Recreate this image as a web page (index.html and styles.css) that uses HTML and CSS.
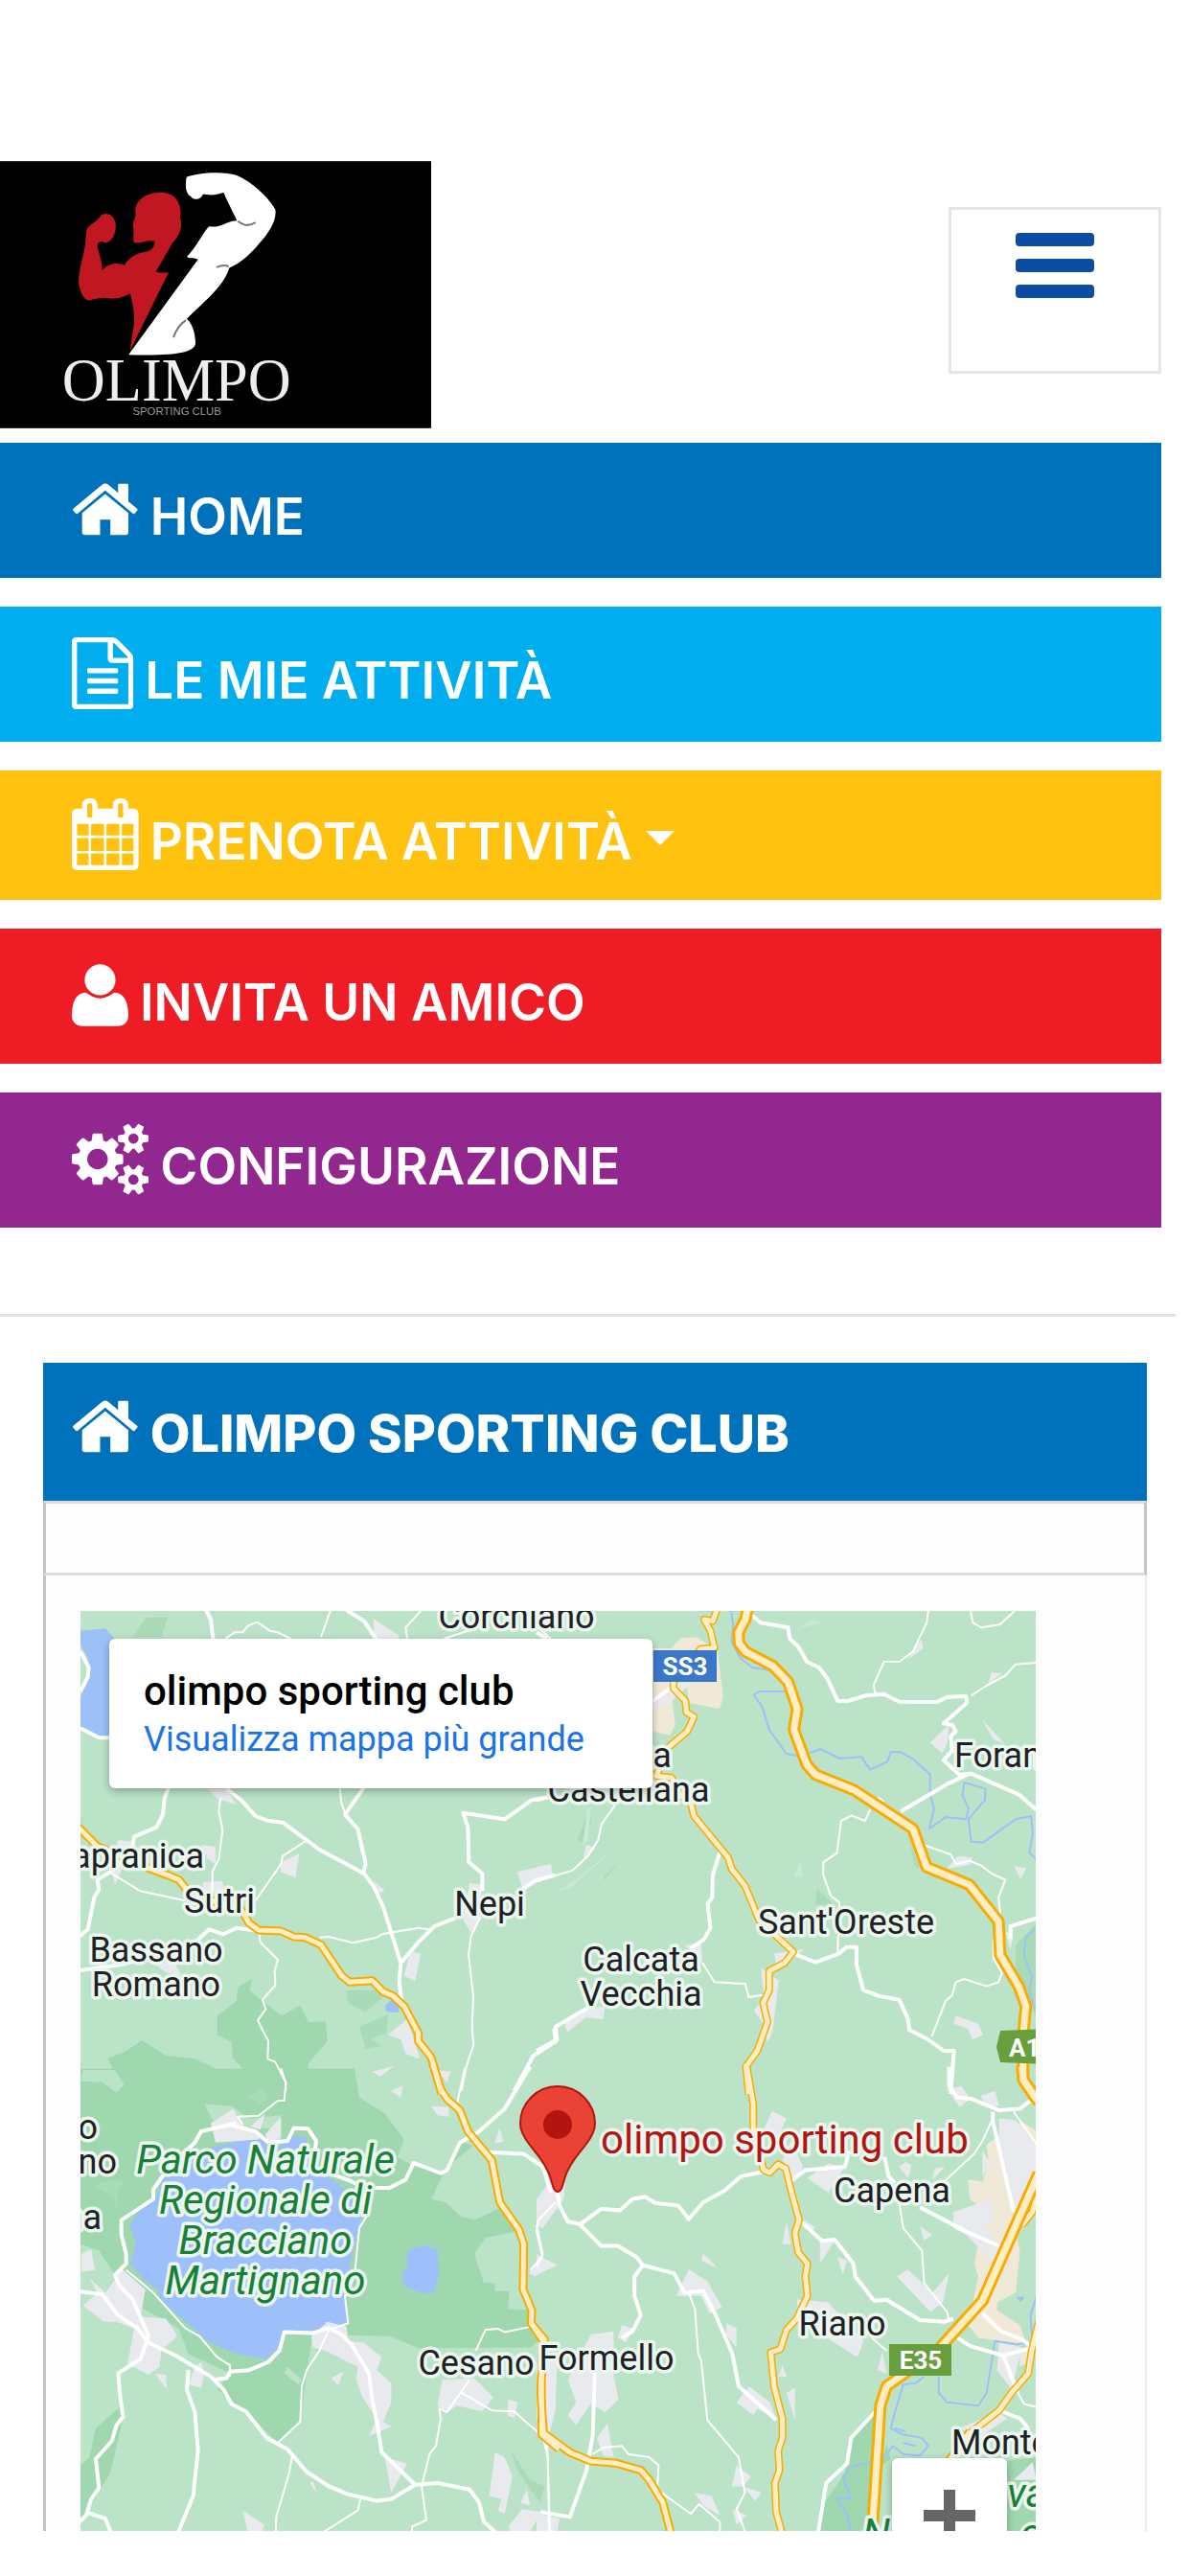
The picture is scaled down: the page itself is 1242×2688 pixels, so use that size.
FILE: index.html
```html
<!DOCTYPE html>
<html lang="it">
<head>
<meta charset="utf-8">
<meta name="viewport" content="width=device-width, initial-scale=1">
<title>Olimpo Sporting Club</title>
<link rel="stylesheet" href="styles.css">
</head>
<body>
<header class="site-header">
  <div class="brand-row">
    <a class="brand" href="#" aria-label="Olimpo Sporting Club">
      <svg class="logo" viewBox="0 54 1350 836">
        <rect y="54" width="1350" height="836" fill="#000"/>
        <path fill="#c01722" d="M408 645C412 600 422 570 420 540 418 505 412 490 408 468 390 478 370 486 345 484 325 478 300 484 280 490 262 490 252 465 247 440 242 410 262 350 266 320 270 290 268 270 275 262 290 245 305 242 318 222 335 212 358 222 362 250 364 275 355 305 330 310 310 300 303 310 306 328 312 350 320 370 320 395 340 372 370 370 390 380 400 360 425 342 455 338 470 335 482 330 485 305 465 298 445 312 420 310 414 295 422 270 416 255 416 240 426 235 424 215 420 180 455 150 510 152 550 155 572 190 564 230 574 260 560 290 540 310L488 400C500 406 515 402 528 402Z"/>
        <path fill="#fff" d="M404 658L620 362C605 352 590 362 586 352 610 330 640 270 655 258 690 265 710 240 742 240 725 205 712 180 700 152 670 165 650 158 635 158 630 175 608 178 598 165 580 155 580 130 584 104 620 90 700 84 745 100 800 125 845 175 862 205 868 240 840 280 815 308 780 350 750 375 718 388 700 450 630 500 585 548 605 565 612 600 612 625 608 655 540 664 404 660Z"/>
        <path d="M745 242Q770 264 800 246M678 386Q700 376 716 384M582 552Q555 570 543 606" fill="none" stroke="#777" stroke-width="6"/>
        <text class="logo-name" x="553" y="804" text-anchor="middle">OLIMPO</text>
        <text class="logo-sub" x="554" y="850" text-anchor="middle">SPORTING CLUB</text>
      </svg>
    </a>
    <button class="menu-toggle" type="button" aria-label="Menu"><span class="bar"></span><span class="bar"></span><span class="bar"></span></button>
  </div>
  <nav class="menu">
    <a class="item home" href="#"><svg class="icon" viewBox="64 0 1664 1792"><path d="M1472 992v480q0 26-19 45t-45 19h-384v-384h-256v384h-384q-26 0-45-19t-19-45v-480q0-1 .5-3t.5-3l575-474 575 474q1 2 1 6zm223-69l-62 74q-8 9-21 11h-3q-13 0-21-7l-692-577-692 577q-12 8-24 7-13-2-21-11l-62-74q-8-10-7-23.5t11-21.5l719-599q32-26 76-26t76 26l244 204v-195q0-14 9-23t23-9h192q14 0 23 9t9 23v408l219 182q10 8 11 21.5t-7 23.5z"/></svg><span>HOME</span></a>
    <a class="item activities" href="#"><svg class="icon" viewBox="128 0 1536 1792"><path d="M1596 380q28 28 48 76t20 88v1152q0 40-28 68t-68 28h-1344q-40 0-68-28t-28-68v-1600q0-40 28-68t68-28h896q40 0 88 20t76 48zm-444-244v376h376q-10-29-22-41l-313-313q-12-12-41-22zm384 1528v-1024h-416q-40 0-68-28t-28-68v-416h-768v1536h1280zm-1024-864q0-14 9-23t23-9h704q14 0 23 9t9 23v64q0 14-9 23t-23 9h-704q-14 0-23-9t-9-23v-64zm736 224q14 0 23 9t9 23v64q0 14-9 23t-23 9h-704q-14 0-23-9t-9-23v-64q0-14 9-23t23-9h704zm0 256q14 0 23 9t9 23v64q0 14-9 23t-23 9h-704q-14 0-23-9t-9-23v-64q0-14 9-23t23-9h704z"/></svg><span>LE MIE ATTIVITÀ</span></a>
    <button class="item booking" type="button" aria-haspopup="true"><svg class="icon" viewBox="64 0 1664 1792"><path d="M192 1664h288v-288h-288v288zm352 0h320v-288h-320v288zm-352-352h288v-320h-288v320zm352 0h320v-320h-320v320zm-352-384h288v-288h-288v288zm736 736h320v-288h-320v288zm-384-736h320v-288h-320v288zm768 736h288v-288h-288v288zm-384-352h320v-320h-320v320zm-352-864v-288q0-13-9.5-22.5t-22.5-9.5h-64q-13 0-22.5 9.5t-9.5 22.5v288q0 13 9.5 22.5t22.5 9.5h64q13 0 22.5-9.5t9.5-22.5zm736 864h288v-320h-288v320zm-384-384h320v-288h-320v288zm384 0h288v-288h-288v288zm32-480v-288q0-13-9.5-22.5t-22.5-9.5h-64q-13 0-22.5 9.5t-9.5 22.5v288q0 13 9.5 22.5t22.5 9.5h64q13 0 22.5-9.5t9.5-22.5zm384-64v1280q0 52-38 90t-90 38h-1408q-52 0-90-38t-38-90v-1280q0-52 38-90t90-38h128v-96q0-66 47-113t113-47h64q66 0 113 47t47 113v96h384v-96q0-66 47-113t113-47h64q66 0 113 47t47 113v96h128q52 0 90 38t38 90z"/></svg><span>PRENOTA ATTIVITÀ</span><span class="caret"></span></button>
    <a class="item invite" href="#"><svg class="icon" viewBox="192 0 1408 1792"><path d="M1600 1405q0 120-73 189.500t-194 69.500h-874q-121 0-194-69.500t-73-189.500q0-53 3.500-103.500t14-109 26.500-108.500 43-97.500 62-81 85.500-53.500 111.500-20q9 0 42 21.500t74.500 48 108 48 133.500 21.500 133.500-21.500 108-48 74.500-48 42-21.500q61 0 111.500 20t85.500 53.500 62 81 43 97.500 26.500 108.500 14 109 3.500 103.500zm-320-893q0 159-112.500 271.500t-271.500 112.500-271.500-112.500-112.500-271.500 112.500-271.500 271.500-112.500 271.500 112.500 112.500 271.500z"/></svg><span>INVITA UN AMICO</span></a>
    <a class="item settings" href="#"><svg class="icon" viewBox="0 0 1920 1792"><path d="M896 896q0-106-75-181t-181-75-181 75-75 181 75 181 181 75 181-75 75-181zm768 512q0-52-38-90t-90-38-90 38-38 90q0 53 37.500 90.500t90.500 37.500 90.500-37.500 37.500-90.500zm0-1024q0-52-38-90t-90-38-90 38-38 90q0 53 37.500 90.500t90.500 37.500 90.500-37.500 37.500-90.500zm-384 421v185q0 10-7 19.500t-16 10.500l-155 24q-11 35-32 76 34 48 90 115 7 11 7 20 0 12-7 19-23 30-82.500 89.500t-78.500 59.500q-11 0-21-7l-115-90q-37 19-77 31-11 108-23 155-7 24-30 24h-186q-11 0-20-7.500t-10-17.500l-23-153q-34-10-75-31l-118 89q-7 7-20 7-11 0-21-8-144-133-144-160 0-9 7-19 10-14 41-53t47-61q-23-44-35-82l-152-24q-10-1-17-9.500t-7-19.500v-185q0-10 7-19.500t16-10.500l155-24q11-35 32-76-34-48-90-115-7-11-7-20 0-12 7-20 22-30 82-89t79-59q11 0 21 7l115 90q34-18 77-32 11-108 23-154 7-24 30-24h186q11 0 20 7.500t10 17.500l23 153q34 10 75 31l118-89q8-7 20-7 11 0 21 8 144 133 144 160 0 8-7 19-12 16-42 54t-45 60q23 48 34 82l152 23q10 2 17 10.500t7 19.500zm640 533v140q0 16-149 31-12 27-30 52 51 113 51 138 0 4-4 7-122 71-124 71-8 0-46-47t-52-68q-20 2-30 2t-30-2q-14 21-52 68t-46 47q-2 0-124-71-4-3-4-7 0-25 51-138-18-25-30-52-149-15-149-31v-140q0-16 149-31 13-29 30-52-51-113-51-138 0-4 4-7 4-2 35-20t59-34 30-16q8 0 46 46.500t52 67.500q20-2 30-2t30 2q51-71 92-112l6-2q4 0 124 70 4 3 4 7 0 25-51 138 17 23 30 52 149 15 149 31zm0-1024v140q0 16-149 31-12 27-30 52 51 113 51 138 0 4-4 7-122 71-124 71-8 0-46-47t-52-68q-20 2-30 2t-30-2q-14 21-52 68t-46 47q-2 0-124-71-4-3-4-7 0-25 51-138-18-25-30-52-149-15-149-31v-140q0-16 149-31 13-29 30-52-51-113-51-138 0-4 4-7 4-2 35-20t59-34 30-16q8 0 46 46.500t52 67.500q20-2 30-2t30 2q51-71 92-112l6-2q4 0 124 70 4 3 4 7 0 25-51 138 17 23 30 52 149 15 149 31z"/></svg><span>CONFIGURAZIONE</span></a>
  </nav>
</header>
<hr class="divider">
<main class="panel">
  <h1 class="panel-title"><svg class="icon" viewBox="64 0 1664 1792"><path d="M1472 992v480q0 26-19 45t-45 19h-384v-384h-256v384h-384q-26 0-45-19t-19-45v-480q0-1 .5-3t.5-3l575-474 575 474q1 2 1 6zm223-69l-62 74q-8 9-21 11h-3q-13 0-21-7l-692-577-692 577q-12 8-24 7-13-2-21-11l-62-74q-8-10-7-23.5t11-21.5l719-599q32-26 76-26t76 26l244 204v-195q0-14 9-23t23-9h192q14 0 23 9t9 23v408l219 182q10 8 11 21.5t-7 23.5z"/></svg><span>OLIMPO SPORTING CLUB</span></h1>
  <div class="panel-strip"></div>
  <div class="panel-body">
    <section class="map" aria-label="Mappa">
      <svg class="map-canvas" viewBox="84 1681 997 960" preserveAspectRatio="xMinYMin slice">
        <defs>
          <g id="highways">
            <svg class="tile" x="60" y="1660" width="520" height="520" viewBox="0 0 1560 1560" preserveAspectRatio="none"><path d="M60 735L125 800 290 870 345 890 380 905 420 955 570 990 600 1040 630 1062 700 1065 740 1083 775 1085 825 1108 890 1205 915 1225 985 1220 1020 1255 1050 1268 1085 1300 1130 1385 1130 1410 1170 1460 1203 1575"/></svg>
            <svg class="tile" x="60" y="2160" width="520" height="528" viewBox="0 0 1560 1568" preserveAspectRatio="none"><path d="M1175 -20L1200 60 1220 90 1260 125 1285 190 1360 280 1385 410 1445 495 1460 540 1458 680 1485 745 1483 785 1525 835 1515 960 1517 1130 1570 1175"/></svg>
            <svg class="tile" x="560" y="2160" width="682" height="528" viewBox="0 0 1568 1568" preserveAspectRatio="none"><path d="M-5 800L16 840 10 1000 17 1125 80 1185 130 1212 190 1218 250 1240 270 1270 303 1340 325 1450M1040 1120L990 1210"/></svg>
          </g>
          <g id="state-roads">
            <svg class="tile" x="560" y="1660" width="560" height="520" viewBox="0 0 1568 1560" preserveAspectRatio="none"><path d="M530 50L515 95 490 90 508 125 520 178 480 182 400 285 400 305 435 345 438 380 460 395 440 440 380 495 350 580 395 585 420 640 450 660 460 705 560 835 570 870 610 925 650 1030 750 1130 725 1165 680 1190 680 1250 662 1290 675 1350 645 1440 612 1490 620 1575"/></svg>
            <svg class="tile" x="560" y="2160" width="682" height="528" viewBox="0 0 1568 1568" preserveAspectRatio="none"><path d="M503 -20L520 105 520 180 545 310 560 318 580 292 598 305 612 380 630 465 620 505 628 565 650 600 645 640 650 700 625 770 600 805 585 865 562 875 570 980 590 1080 590 1140 580 1180 583 1240 572 1280 575 1370 590 1440M1205 780L1188 870 1180 940 1140 1000 1110 1055 1040 1125M1200 390L1190 440 1165 480"/></svg>
          </g>
          <g id="motorway">
            <svg class="tile" x="560" y="1660" width="560" height="520" viewBox="0 0 1568 1560" preserveAspectRatio="none"><path d="M618 50L610 90 590 130 592 165 610 190 690 235 735 285 762 370 752 435 790 545 815 575 930 625 1100 745 1140 865 1265 920 1350 1035 1355 1140 1410 1240 1430 1300 1422 1390 1422 1530 1460 1590"/></svg>
            <svg class="tile" x="560" y="2160" width="682" height="528" viewBox="0 0 1568 1568" preserveAspectRatio="none"><path d="M1165 -10L1168 30 1205 100M1205 320L1070 715 965 865 840 980 825 1040 805 1440"/></svg>
          </g>
        </defs>
        <rect class="land" x="84" y="1681" width="997" height="960"/>
        <g class="areas">
          <svg class="tile" x="60" y="1660" width="520" height="520" viewBox="0 0 1560 1560" preserveAspectRatio="none">
            <path class="park" d="M72 1565L72 1540 100 1530 180 1555 175 1500 158 1465 215 1440 265 1408 340 1455 430 1465 520 1508 585 1500 550 1465 545 1412 500 1390 500 1330 560 1285 565 1240 610 1215 600 1250 700 1330 760 1298 785 1350 840 1348 845 1410 785 1480 785 1515 865 1545 900 1520 935 1565Z"/>
            <path class="wood" d="M275 85L345 82 325 145 235 145ZM905 1250L1000 1250 1020 1270 965 1320 910 1290ZM945 1365L1035 1325 1030 1385 980 1400 1015 1425 965 1435Z"/>
            <path class="water" d="M72 125L150 118 180 150 180 455 130 455 72 425ZM1025 1300L1045 1280 1070 1300 1068 1320 1030 1318Z"/>
            <path class="land" d="M72 170L95 210 102 250 72 335Z"/>
            <path class="town" d="M990 88L1070 140 1070 150 990 150ZM470 620L530 620 560 670 500 650ZM700 850L758 822 745 898 698 880ZM190 780L235 785 220 830 180 920 170 880ZM450 795L495 800 495 855 470 840ZM455 912L515 908 525 940 460 945ZM1440 880L1545 855 1550 890 1455 930ZM1290 915L1330 920 1320 1030 1295 1070 1270 1030ZM990 905L1025 940 1005 945ZM1105 1130L1138 1135 1120 1222 1085 1205ZM1035 1390L1095 1340 1135 1465 1090 1450 1075 1405ZM985 1505L1055 1487 1010 1520ZM300 1165L365 1165 390 1205 340 1195ZM1185 1500L1230 1505 1220 1540Z"/>
          </svg>
          <svg class="tile" x="560" y="1660" width="560" height="520" viewBox="0 0 1568 1560" preserveAspectRatio="none">
            <path class="wood" d="M240 850L195 910 200 890ZM155 680L160 720 130 790 120 780ZM820 930L870 985 815 980ZM1090 780L1120 870 1105 860ZM1400 1110L1460 1040 1460 1330 1400 1220Z"/>
            <path class="clear" d="M160 680L150 780 135 800 148 680ZM240 795L100 930 55 945 130 890ZM770 850L778 895 750 895ZM760 120L800 92 838 98Z"/>
            <path class="airport" d="M395 180L420 148 470 145 530 190 545 330 535 370 445 350 440 300 395 330 405 420 390 452 340 440 340 180Z"/>
            <path class="town" d="M340 345L395 300 450 290 380 360 340 360ZM0 865L42 855 48 895 0 915ZM145 795L172 805 135 845ZM1125 150L1130 180 1085 215ZM1150 475L1205 420 1200 480 1185 508ZM1300 400L1370 480 1335 465ZM1330 255L1362 258 1320 290ZM1200 870L1230 830 1275 835 1265 858ZM1395 862L1432 868 1415 902ZM655 1180L708 1220 690 1380 675 1415 665 1360 635 1315 665 1270ZM695 1135L785 1122 700 1180ZM80 1350L150 1310 200 1300 195 1342 145 1335 90 1382ZM1225 1330L1290 1355 1305 1390 1275 1405 1260 1370 1220 1355ZM435 1110L480 1100 485 1170ZM1370 1065L1392 1080 1385 1125Z"/>
          </svg>
          <svg class="tile" x="60" y="2160" width="520" height="528" viewBox="0 0 1560 1568" preserveAspectRatio="none">
            <path class="park" d="M72 -4L930 -4 945 85 1025 135 1085 215 1065 270 1120 300 1215 320 1260 220 1300 235 1220 300 1170 400 1215 410 1260 452 1305 465 1390 425 1440 500 1340 520 1305 570 1335 660 1370 660 1370 685 1415 685 1410 740 1480 745 1520 830 1480 860 1130 862 1040 825 910 822 800 810 790 870 760 1090 690 1155 590 1060 500 990 540 940 410 880 380 800 270 740 170 620 130 560 72 540ZM72 1225L100 1200 120 1110 195 1045 205 1080 165 1250 90 1370 72 1385Z"/>
            <path class="land" d="M80 0L180 0 208 45 185 70 140 38 72 35ZM460 105L545 112 600 150 700 140 700 185 570 175 485 155ZM720 920L765 960 755 975 710 940Z"/>
            <path class="wood" d="M110 360L175 390 185 430 190 365 215 350 165 340ZM600 80L640 60 660 90 630 105ZM1420 1180L1480 1270 1525 1290 1510 1340 1440 1240Z"/>
            <path class="water" d="M480 240L560 222 630 215 690 240 740 205 780 208 790 300 870 345 935 400 950 460 940 500 915 600 925 640 895 710 910 780 840 805 710 810 690 860 655 895 560 880 470 840 390 770 320 710 315 680 270 650 228 600 245 535 225 480 260 430 310 395 330 330ZM1095 560L1150 543 1190 555 1195 630 1180 690 1145 693 1085 670 1078 630 1095 610Z"/>
            <path class="town" d="M480 165L550 120 575 170 640 200 630 215 495 225ZM605 175L650 135 635 185ZM650 200L700 145 700 210 665 235ZM75 570L105 555 118 620 75 625ZM100 645L150 690 180 650 200 615 275 680 260 765 340 770 375 825 325 870 320 920 285 945 220 910 240 800 185 780 145 780 80 730 125 690ZM450 905L460 940 450 985 410 975 430 920ZM305 940L340 945 342 990ZM795 825L845 780 905 795 910 840 960 845 1015 890 1000 930 1045 970 1045 1030 1020 1090 1045 1105 975 1135 1000 1080 955 1015 935 960 940 920 840 870 800 860ZM895 935L880 978 858 955ZM1025 1200L1095 1220 1045 1310ZM1205 960L1305 955 1365 1015 1330 1058 1250 1040 1215 1065 1190 1040ZM1412 1020L1440 1030 1430 1080 1408 1070ZM1370 1185L1400 1200 1425 1260 1400 1375 1380 1365 1390 1330 1352 1320ZM1415 1410L1455 1360 1515 1370 1480 1430 1415 1430ZM580 1365L648 1410 640 1430 595 1430ZM1530 900L1560 950 1560 1050 1535 1150ZM1500 400L1560 320 1560 400 1510 490ZM1170 112L1225 115 1225 145 1190 140ZM1042 65L1082 48 1075 85ZM1385 178L1395 222 1368 228ZM1475 630L1510 585 1555 605 1495 640ZM800 1275L815 1315 790 1280ZM1470 1300L1480 1350 1450 1340Z"/>
          </svg>
          <svg class="tile" x="560" y="2160" width="682" height="528" viewBox="0 0 1568 1568" preserveAspectRatio="none">
            <path class="park" d="M810 1050L815 1430 680 1430 685 1350 740 1250 755 1140ZM840 1160L850 1205 825 1230ZM1130 1210L1200 1200 1200 1430 1130 1430Z"/>
            <path class="airport" d="M1035 340L1070 345 1085 290 1080 230 1165 160 1200 190 1200 320 1150 500 1160 560 1150 690 1105 720 1105 745 1160 790 1175 850 1060 830 1035 790 1060 640 1050 600 1060 540 1035 500 1070 430 1040 400ZM1160 870L1185 860 1190 900 1160 920Z"/>
            <path class="town" d="M1000 440L1090 400 1100 460 1070 480 1110 540 1100 600 1030 510 1000 490ZM1110 150L1150 155 1200 240 1200 300 1145 450 1110 260ZM1065 80L1100 65 1110 110 1080 115ZM985 60L1020 50 1040 90 1015 115ZM0 400L30 360 70 350 65 400 15 490 0 480ZM565 128L600 150 580 205 545 185ZM610 220L640 300 620 345 590 280ZM600 470L610 540 590 540ZM640 460L670 490 655 500ZM680 520L715 530 680 600ZM722 580L745 590 735 635ZM865 640L890 618 950 690 990 630 975 720 945 750ZM920 485L950 510 930 528ZM885 285L900 295 892 335 870 300ZM955 305L980 300 950 340ZM1070 250L1090 290 1070 330ZM0 570L50 605 0 635ZM365 618L410 655 445 735 415 755 395 700 335 700ZM400 568L435 615 395 590ZM455 785L480 800 480 860 455 820ZM625 710L700 720 785 840 770 890 690 825 630 780ZM830 870L840 940 818 930ZM510 980L560 1030 575 1080 530 1050 520 1070 480 1030ZM600 1000L620 985 620 1085ZM590 915L600 950 580 950ZM130 820L185 810 185 950 197 1020 165 1060 130 1035 95 1100 75 1070 95 1030 75 960ZM205 790L230 800 215 845 195 830ZM170 1095L185 1200 160 1195 145 1140ZM0 910L50 900 45 1020 20 1100 0 1080ZM480 1225L515 1260 495 1290 468 1290ZM495 1290L540 1310 525 1335ZM378 1310L420 1320 440 1380 400 1350ZM470 1360L505 1380 480 1410ZM1110 840L1165 860 1140 990 1105 930ZM1015 1110L1110 1060 1130 1080 1060 1140ZM1145 1270L1190 1215 1200 1270ZM0 1375L55 1390 50 1430 0 1430ZM650 335L700 290 740 300 700 380Z"/>
          </svg>
        </g>
        <g class="rivers">
          <svg class="tile" x="560" y="1660" width="560" height="520" viewBox="0 0 1568 1560" preserveAspectRatio="none"><path d="M568 60L575 110 570 160 595 210 630 240 690 250M730 315L650 315 635 325 660 365 680 435 730 510 770 518 830 495 885 525 950 520 975 560 1025 535 1035 505 1065 505 1105 530 1150 575 1150 640 1162 680 1148 745 1195 708 1255 715 1262 680 1245 640 1250 600 1312 620 1310 655 1262 715 1270 785 1305 788 1400 715 1445 705 1450 760 1440 820 1460 840M1455 1060L1430 1085 1425 1140 1447 1210 1440 1250 1455 1310"/></svg>
          <svg class="tile" x="560" y="2160" width="682" height="528" viewBox="0 0 1568 1568" preserveAspectRatio="none"><path d="M930 950L910 970 880 975 860 1060 850 1110 880 1130 925 1140 940 1165 920 1195 880 1190 855 1165 835 1200 800 1215 755 1230 735 1260 755 1330 720 1325 745 1380 755 1430M965 950L965 1000 985 1030 1060 1040 1080 1000 1100 840 1150 850 1190 845 1185 760 1200 700M1155 705L1168 705 1162 715ZM860 1110L885 1120M880 1155L910 1165"/></svg>
        </g>
        <g class="roads">
          <svg class="tile" x="60" y="1660" width="520" height="520" viewBox="0 0 1560 1560" preserveAspectRatio="none">
            <path class="main" d="M465 60L480 90 488 155M905 60L960 95 1000 155M72 190L98 240 95 270 72 315M72 430L130 460 180 460M350 610L335 650 330 700 310 740 240 770 235 800 180 870 125 905 130 935 115 960 95 1060 60 1090M530 620L575 655 620 705 660 720 705 725 820 810 960 885 990 925 1020 990 1075 1165 1070 1220 1078 1290M960 615L900 700 940 745 965 855 955 890M1545 645L1485 655 1400 715 1270 695 1285 740 1288 850 1330 885 1330 940M1245 1025L1180 1050 1130 1100 1075 1165M60 1190L200 1170 420 1110 475 1060 520 1075 560 1055 630 1065M1455 935L1500 905 1560 890M1430 1565L1490 1455 1560 1410 1555 1370"/>
            <path class="minor" d="M525 150L555 130 580 130 595 110 625 98 665 125 690 130 730 150M855 60L825 145M1140 60L1090 115 1095 148M1210 150L1300 120M1510 120L1545 150M885 620L888 660 905 710M510 650L505 690 517 750 505 840 485 880 485 960M775 785L705 830 700 855 620 970M170 885L260 940 400 970M820 1085L850 1083 925 1102 1000 1085 1015 1075 1130 1055 1165 1060M632 1075L635 1100 690 1155 680 1190 682 1235 642 1280 652 1310 627 1345 660 1410 658 1465 682 1475 715 1540 715 1565M1325 1020L1295 1080 1287 1140 1302 1270 1298 1370 1303 1420 1280 1490 1265 1565"/>
          </svg>
          <svg class="tile" x="560" y="1660" width="560" height="520" viewBox="0 0 1568 1560" preserveAspectRatio="none">
            <path class="main" d="M610 60L655 100 735 115 740 150 765 175 790 222 825 240 850 275 880 345 910 345 960 328 1015 323 1060 347 1170 348 1200 332 1255 330 1258 350 1190 415 1215 420 1225 440 1210 455 1215 500 1190 530 1235 575 1270 572 1410 638 1460 685M1265 572L1200 605 1065 690M0 655L50 640M535 820L515 890 513 960 500 980 508 1055 490 1090 450 1120M150 1305L55 1365 60 1405 0 1440M750 1135L815 1163 885 1135 905 1115 935 1115 935 1170 955 1250 1000 1268 1060 1280 1085 1340 1090 1375 1145 1405 1190 1440 1220 1440 1210 1575M1460 1025L1385 1050 1385 1090M340 345L390 305M0 130L30 150"/>
            <path class="minor" d="M1145 60L1140 100 1100 190 1060 222 1015 222 985 295 990 320M1268 60L1275 100 1300 115 1355 105 1400 60M1460 225L1400 230 1370 265 1310 300 1270 328M230 670L190 730 180 780 150 830 105 875 0 910M975 685L960 720 920 703 890 720 878 820 838 850 838 890 860 955 885 975 880 1130M1130 795L1210 825 1225 855 1265 845 1300 860 1330 885 1370 905 1350 960 1355 1010M1335 1090L1335 1150 1360 1195 1350 1225 1315 1238 1250 1215 1225 1225 1215 1265 1195 1285 1155 1395M485 1165L520 1225 610 1230 620 1272 660 1265M975 680L1000 648 1015 660"/>
          </svg>
          <svg class="tile" x="60" y="2160" width="520" height="528" viewBox="0 0 1560 1568" preserveAspectRatio="none">
            <path class="main" d="M560 165L450 190 430 225 350 300 300 370 300 400 200 465 200 510 215 570 215 600 180 635 195 670 235 710 285 825 260 895 190 940 195 1000 205 1075 185 1100 170 1150 120 1205 130 1295 105 1330 90 1380 60 1410M60 685L140 695 190 760 250 800 285 845 370 885 480 950 520 990 545 1035 590 1058 655 1140 720 1175 780 1245 850 1290 910 1315 1000 1335 1045 1330 1120 1285 1190 1280 1290 1300 1320 1340 1335 1400 1380 1440M90 1370L150 1390 170 1440M410 930L405 990 430 1060 440 1180 425 1320 375 1440M540 170L620 190 660 225 720 220 740 180 785 182 810 220 800 300 920 345 960 365 1040 365 1090 340 1115 288 1200 320 1220 310 1260 225 1320 190 1400 120 1480 -10M490 960L530 955 540 935 600 930 660 905 695 870 710 812 800 815 850 800 890 820 920 850 975 940 985 1020 1000 1090 1015 1185 1120 1285M1345 255L1460 260 1520 300 1545 380"/>
            <path class="minor" d="M700 -5L715 40 710 95 690 95 630 142 565 145 580 170M970 450L945 490 930 640 900 700 910 785 850 805M215 620L300 690 400 800 445 825 500 890 540 915 540 950M850 805L820 870 780 930 765 980 760 1090 690 1155M735 1195L725 1250 685 1385 683 1440M950 1325L940 1365 860 1415 820 1440M1275 -5L1250 110M1560 410L1505 465 1500 500 1518 580 1480 620M1475 797L1400 812 1380 802 1340 805 1310 870M1290 960L1220 1060 1195 1050 1200 1080 1185 1165 1165 1190 1140 1290 1155 1395 1110 1415 1110 1440M1265 1000L1360 1055 1430 1058 1460 1085 1520 1135 1535 1200 1540 1440"/>
          </svg>
          <svg class="tile" x="560" y="2160" width="682" height="528" viewBox="0 0 1568 1568" preserveAspectRatio="none">
            <path class="main" d="M50 375L55 420 75 470 105 478 155 430 200 435 230 400 260 393 285 412 340 420 365 462 400 410 450 375 490 330 545 315M105 480L155 545 195 545 240 580 255 605 330 630 355 690 400 685 430 760 470 880 485 980 575 1085M255 605L235 640 235 700 250 760 230 810 205 830M610 345L645 310 740 300 750 250M835 270L845 330 860 350M635 470L685 530 715 525 760 600 765 640 810 715 840 712 920 775 980 780 1000 770M920 425L1030 500 1110 545M1070 755L1115 810 1165 835 1190 860 1120 885 1040 855 1010 830M990 -10L990 50 1010 85 1045 90 1110 125 1160 120 1200 80M1095 130L1095 160 1145 440M1120 885L1155 1000M1110 1055L1160 1080 1180 1110M140 930L135 1130 120 1240 80 1385 10 1370M815 1055L755 1140 745 1220 695 1280 675 1440"/>
            <path class="minor" d="M1095 150L1070 220 1050 260 975 350M1145 130L1200 230M870 410L880 490 925 560 930 660 985 750 990 780M365 690L380 740 388 880 395 900 410 1085 485 1200 500 1310 480 1360 500 1430M135 1190L160 1170 205 1165 220 1190 270 1200 293 1225 290 1290M300 1310L370 1375 390 1345 440 1400 440 1440M25 1130L32 1430M0 480L15 570 0 610M1155 1000L1170 1035 1200 1045M805 830L840 870"/>
          </svg>
        </g>
        <use class="edge-state" href="#state-roads"/><use class="fill-state" href="#state-roads"/>
        <use class="edge-highway" href="#highways"/><use class="fill-highway" href="#highways"/>
        <use class="edge-motorway" href="#motorway"/><use class="fill-motorway" href="#motorway"/>
        <g class="place">
          <text x="539" y="1699" text-anchor="middle">Corchiano</text>
          <text x="213" y="1949" text-anchor="end">Capranica</text>
          <text x="229" y="1996" text-anchor="middle">Sutri</text>
          <text x="163" y="2047" text-anchor="middle">Bassano</text>
          <text x="163" y="2083" text-anchor="middle">Romano</text>
          <text x="511" y="1999" text-anchor="middle">Nepi</text>
          <text x="656" y="1844" text-anchor="middle">Civita</text>
          <text x="656" y="1880" text-anchor="middle">Castellana</text>
          <text x="996" y="1844">Forano</text>
          <text x="883" y="2018" text-anchor="middle">Sant'Oreste</text>
          <text x="669" y="2057" text-anchor="middle">Calcata</text>
          <text x="669" y="2093" text-anchor="middle">Vecchia</text>
          <text x="102" y="2232" text-anchor="end">o</text>
          <text x="122" y="2268" text-anchor="end">no</text>
          <text x="106" y="2326" text-anchor="end">na</text>
          <text x="931" y="2298" text-anchor="middle">Capena</text>
          <text x="879" y="2437" text-anchor="middle">Riano</text>
          <text x="633" y="2473" text-anchor="middle">Formello</text>
          <text x="497" y="2478" text-anchor="middle">Cesano</text>
          <text x="993" y="2561">Monterotondo</text>
        </g>
        <g class="nature">
          <text x="277" y="2268" text-anchor="middle">Parco Naturale</text>
          <text x="277" y="2310" text-anchor="middle">Regionale di</text>
          <text x="277" y="2352" text-anchor="middle">Bracciano</text>
          <text x="277" y="2394" text-anchor="middle">Martignano</text>
          <text x="1051" y="2616">va</text>
          <text x="900" y="2658">N</text>
          <text x="1065" y="2658">c</text>
        </g>
        <g class="shield">
          <rect x="682" y="1722" width="66" height="33" fill="#3a77c9"/><text x="715" y="1748" text-anchor="middle">SS3</text>
          <path d="M1044 2119L1090 2117V2154L1044 2152 1040 2136Z" fill="#689f3d"/><text x="1053" y="2146">A1</text>
          <rect x="928" y="2446" width="65" height="33" fill="#689f3d"/><text x="961" y="2472" text-anchor="middle">E35</text>
        </g>
        <path class="pin" d="M582 2287c-4 0-5-6-8-16-5-15-14-23-22-34-6-8-9-14-9-21a39 39 0 0 1 78 0c0 7-3 13-9 21-8 11-17 19-22 34-3 10-4 16-8 16z"/>
        <circle cx="582" cy="2217" r="15" fill="#b31412"/>
        <text class="pin-label" x="627" y="2247">olimpo sporting club</text>
      </svg>
      <div class="place-card">
        <div class="place-name">olimpo sporting club</div>
        <a class="place-link" href="#">Visualizza mappa più grande</a>
      </div>
      <button class="zoom-in" type="button" aria-label="Zoom avanti"><svg class="plus" viewBox="0 0 54 54"><path d="M21 0h12v21h21v12H33v21H21V33H0V21h21z" fill="#666"/></svg></button>
    </section>
  </div>
</main>
</body>
</html>
```
FILE: styles.css
```css
* { box-sizing: border-box; }

body {
  margin: 0;
  padding: 168px 0 45px;
  background: #fff;
  font-family: Inter, "Liberation Sans", sans-serif;
}

.site-header { margin-right: 30px; }

.brand-row {
  display: flex;
  justify-content: space-between;
  align-items: center;
  margin-bottom: 15px;
}
.brand { display: block; }
.logo { display: block; width: 450px; height: 279px; }
.logo-name { font: 187px "Liberation Serif", serif; fill: #eee; }
.logo-sub { font: 34px "Liberation Sans", sans-serif; fill: #999; }

.menu-toggle {
  display: flex;
  flex-direction: column;
  align-items: center;
  gap: 13px;
  width: 222px;
  height: 174px;
  margin-bottom: 9px;
  padding: 24px 0 0;
  border: 3px solid #e5e5e5;
  background: #fff;
}
.bar { width: 82px; height: 14px; border-radius: 4px; background: #0c4da2; }

.menu { display: flex; flex-direction: column; gap: 30px; }
.item {
  display: block;
  width: 100%;
  padding: 32px 75px 34px;
  border: 0;
  color: #fff;
  font: 600 53px/54px Inter, "Liberation Sans", sans-serif;
  text-align: left;
  text-decoration: none;
}
.icon {
  height: 75px;
  margin-right: 12px;
  vertical-align: -11px;
  fill: #fff;
}
.home { background: #0072bc; }
.activities { background: #00aeef; }
.booking { padding: 29px 75px 31px; background: #ffc20e; }
.invite { background: #ee1d25; }
.settings { background: #92278f; }
.caret {
  display: inline-block;
  margin-left: 14px;
  border: 15px solid transparent;
  border-top-color: #fff;
  border-bottom: 0;
  vertical-align: 15px;
}

.divider { height: 3px; margin: 90px 15px 48px 0; border: 0; background: #dee2e6; }

.panel { margin: 0 45px; }
.panel-title {
  margin: 0;
  padding: 29px 30px 40px;
  background: #0072bc;
  color: #fff;
  font-size: 54px;
  font-weight: 800;
  line-height: 54px;
}
.panel-strip {
  height: 78px;
  border: solid #dcdcdc;
  border-width: 3px;
  border-left: 3px solid #c4c4c4;
  border-right: 3px solid #c4c4c4;
  background: #fdfdfd;
}
.panel-body {
  padding: 37px 36px 0;
  border-left: 3px solid #c4c4c4;
  border-right: 2px solid #ececec;
  background: #fdfdfd;
}

.map {
  position: relative;
  max-width: 997px;
  height: 960px;
  overflow: hidden;
  font-family: Roboto, sans-serif;
}
.map-canvas { display: block; width: 100%; height: 100%; }
.tile { overflow: visible; }
.tile path { vector-effect: non-scaling-stroke; stroke-linejoin: round; }
.land { fill: #bbe3c8; }
.park { fill: #9fd7af; }
.wood { fill: #aadbb8; }
.clear { fill: #c8e9d2; }
.water { fill: #9dc0fa; }
.town { fill: #e8eaed; }
.airport { fill: #f1e9d8; }
.rivers { fill: none; stroke: #9dc0fa; stroke-width: 2px; }
.roads { fill: none; stroke: #fff; }
.main { stroke-width: 4px; }
.minor { stroke-width: 2px; }
.edge-state, .edge-highway, .edge-motorway { fill: none; stroke: #f9ab00; }
.fill-state, .fill-highway, .fill-motorway { fill: none; stroke: #ffeec3; }
.edge-state { stroke-width: 8px; }
.fill-state { stroke-width: 5px; }
.edge-highway { stroke-width: 9px; }
.fill-highway { stroke-width: 5px; }
.edge-motorway { stroke-width: 13px; }
.fill-motorway { stroke-width: 7px; }

.place, .nature, .pin-label {
  paint-order: stroke;
  stroke: #eaf6ee;
  stroke-width: 7px;
  stroke-linejoin: round;
}
.place { font-size: 36px; fill: #202124; }
.nature { font-size: 42px; font-style: italic; fill: #188038; }
.shield { font-size: 26px; font-weight: 700; fill: #fff; }
.pin { fill: #ea4335; stroke: #b31412; stroke-width: 2px; }
.pin-label { font-size: 42px; fill: #b31412; }

.place-card {
  position: absolute;
  top: 29px;
  left: 30px;
  width: 567px;
  padding: 29px 36px 27px;
  border-radius: 6px;
  background: #fff;
  box-shadow: 0 3px 9px rgba(0, 0, 0, .3);
}
.place-name { color: #000; font-size: 42px; font-weight: 500; line-height: 52px; }
.place-link {
  display: block;
  color: #1a73e8;
  font-size: 36px;
  line-height: 48px;
  text-decoration: none;
}
.zoom-in {
  position: absolute;
  top: 884px;
  right: 30px;
  width: 120px;
  height: 120px;
  padding: 0;
  border: 0;
  border-radius: 6px;
  background: #fff;
  box-shadow: 0 3px 9px rgba(0, 0, 0, .3);
}
.plus { display: block; width: 54px; height: 54px; margin: auto; }
```
